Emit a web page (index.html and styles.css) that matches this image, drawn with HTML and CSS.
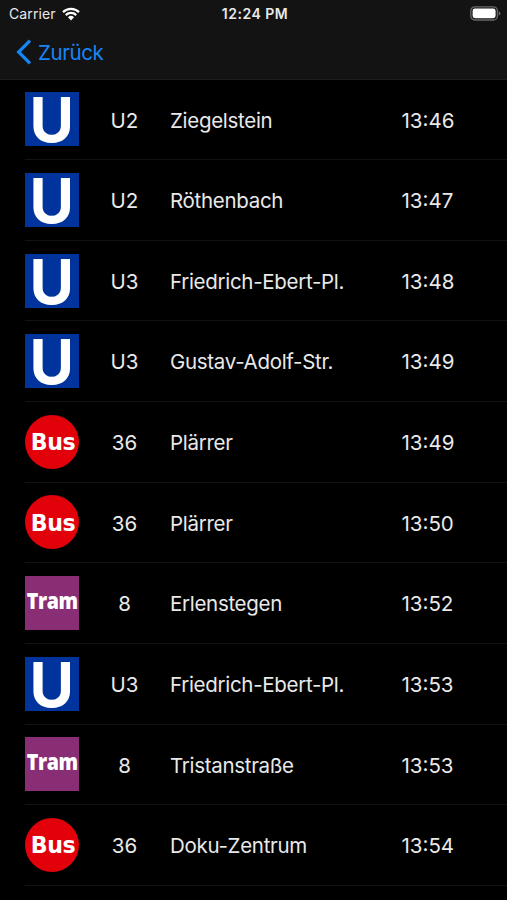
FILE: index.html
```html
<!DOCTYPE html>
<html lang="de">
<head>
    <meta charset="UTF-8">
    <meta name="viewport" content="width=device-width, initial-scale=1.0">
    <title>Abfahrten</title>
    <link rel="stylesheet" href="styles.css">
</head>
<body>
    <header class="header">
        <div class="status-bar">
            <div class="carrier">
                <span>Carrier</span>
                <svg class="wifi" viewBox="0 0 18 14">
                    <path d="M1 5.1a11.4 11.4 0 0 1 16 0M3.8 8.1a7.4 7.4 0 0 1 10.4 0" fill="none" stroke="#fff" stroke-width="2.2"/>
                    <path d="M6 10.3a4.3 4.3 0 0 1 6 0L9 13.5z" fill="#fff"/>
                </svg>
            </div>
            <div class="clock">12:24 PM</div>
            <svg class="battery" viewBox="0 0 31 15">
                <rect x="0.8" y="0.8" width="26.6" height="13.2" rx="4" fill="none" stroke="#68686a" stroke-width="1.3"/>
                <rect x="2.6" y="2.6" width="23" height="9.6" rx="2.4" fill="#fff"/>
                <path d="M28.7 5.2q1.8.8 1.8 2.2t-1.8 2.2z" fill="#68686a"/>
            </svg>
        </div>
        <a class="back" href="#">
            <svg class="chevron" viewBox="0 0 16 26">
                <path d="M14 1.6L2.6 13L14 24.4" fill="none" stroke="#1686f5" stroke-width="3.2"/>
            </svg>
            <span>Zurück</span>
        </a>
    </header>

    <ul class="departures">
        <li class="departure">
            <div class="icon ubahn"><span>U</span></div>
            <span class="line">U2</span>
            <span class="destination">Ziegelstein</span>
            <span class="time">13:46</span>
        </li>
        <li class="departure">
            <div class="icon ubahn"><span>U</span></div>
            <span class="line">U2</span>
            <span class="destination">Röthenbach</span>
            <span class="time">13:47</span>
        </li>
        <li class="departure">
            <div class="icon ubahn"><span>U</span></div>
            <span class="line">U3</span>
            <span class="destination">Friedrich-Ebert-Pl.</span>
            <span class="time">13:48</span>
        </li>
        <li class="departure">
            <div class="icon ubahn"><span>U</span></div>
            <span class="line">U3</span>
            <span class="destination">Gustav-Adolf-Str.</span>
            <span class="time">13:49</span>
        </li>
        <li class="departure">
            <div class="icon bus"><span>Bus</span></div>
            <span class="line">36</span>
            <span class="destination">Plärrer</span>
            <span class="time">13:49</span>
        </li>
        <li class="departure">
            <div class="icon bus"><span>Bus</span></div>
            <span class="line">36</span>
            <span class="destination">Plärrer</span>
            <span class="time">13:50</span>
        </li>
        <li class="departure">
            <div class="icon tram"><span>Tram</span></div>
            <span class="line">8</span>
            <span class="destination">Erlenstegen</span>
            <span class="time">13:52</span>
        </li>
        <li class="departure">
            <div class="icon ubahn"><span>U</span></div>
            <span class="line">U3</span>
            <span class="destination">Friedrich-Ebert-Pl.</span>
            <span class="time">13:53</span>
        </li>
        <li class="departure">
            <div class="icon tram"><span>Tram</span></div>
            <span class="line">8</span>
            <span class="destination">Tristanstraße</span>
            <span class="time">13:53</span>
        </li>
        <li class="departure">
            <div class="icon bus"><span>Bus</span></div>
            <span class="line">36</span>
            <span class="destination">Doku-Zentrum</span>
            <span class="time">13:54</span>
        </li>
    </ul>
</body>
</html>
```
FILE: styles.css
```css
* {
    margin: 0;
    padding: 0;
    box-sizing: border-box;
}

body {
    font-family: Inter, "Liberation Sans", sans-serif;
    background-color: #000;
    color: #e9e9e9;
    height: 100vh;
    overflow: hidden;
}

.header {
    height: 79.5px;
    background-color: #131313;
    border-bottom: 1px solid #1d1d1d;
}

.status-bar {
    display: grid;
    grid-template-columns: 1fr auto 1fr;
    align-items: center;
    height: 27px;
    padding: 0 6px 0 9px;
    font-size: 14px;
}

.carrier {
    display: flex;
    align-items: center;
    gap: 6px;
    letter-spacing: 0.1px;
}

.wifi {
    width: 18px;
    height: 14px;
}

.clock {
    font-size: 14px;
    font-weight: 600;
    letter-spacing: 0.5px;
}

.battery {
    width: 31px;
    height: 15px;
    justify-self: end;
}

.back {
    display: inline-flex;
    align-items: center;
    gap: 6px;
    height: 50px;
    padding-left: 16px;
    font-size: 20.5px;
    letter-spacing: -0.4px;
    color: #1686f5;
    text-decoration: none;
}

.chevron {
    width: 16px;
    height: 26px;
}

.departures {
    list-style: none;
    margin-left: 25px;
}

.departure {
    display: grid;
    grid-template-columns: 54px 91px 231.5px 1fr;
    align-items: center;
    height: 80.63px;
    border-bottom: 1px solid #121212;
    font-size: 20.5px;
}

.line,
.destination,
.time {
    padding-top: 1.4px;
}

.line {
    text-align: center;
}

.destination {
    letter-spacing: -0.3px;
}

.icon {
    display: flex;
    align-items: center;
    justify-content: center;
    width: 54px;
    height: 54px;
    color: #fff;
    line-height: 1;
    white-space: nowrap;
}

.ubahn {
    background-color: #00349c;
    font-size: 62px;
    font-weight: 700;
}

.ubahn span {
    transform: translateY(0.5px) scaleX(0.98);
}

.bus {
    background-color: #e2000b;
    border-radius: 50%;
    font-family: "DejaVu Sans", sans-serif;
    font-size: 23px;
    font-weight: 700;
}

.bus span {
    letter-spacing: -0.3px;
    transform: translate(0.7px, 0.5px) scaleX(0.96);
}

.tram {
    background-color: #892e74;
    font-family: "Open Sans", sans-serif;
    font-size: 22.5px;
    font-weight: 800;
}

.tram span {
    letter-spacing: -0.5px;
    transform: translateY(-2.2px) scaleX(0.87);
}
```
